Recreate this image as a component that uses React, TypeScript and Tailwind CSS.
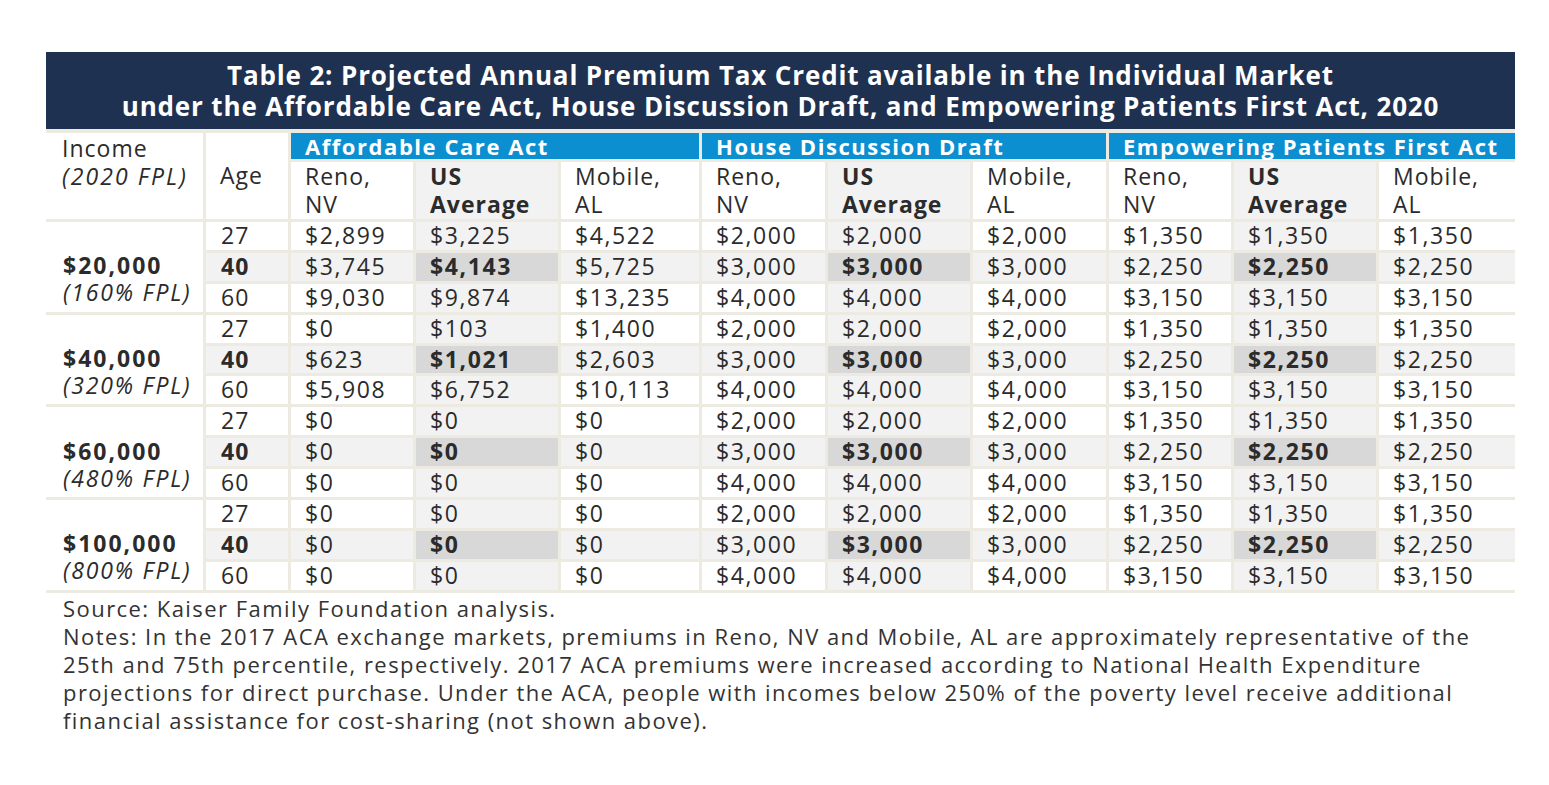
import React from "react";

const FONT = { fontFamily: '"Open Sans", "Noto Sans", sans-serif' };

type Group = {
  income: string;
  fpl: string;
  rows: { age: string; vals: string[] }[];
};

const groups: Group[] = [
  {
    income: "$20,000",
    fpl: "(160% FPL)",
    rows: [
      { age: "27", vals: ["$2,899", "$3,225", "$4,522", "$2,000", "$2,000", "$2,000", "$1,350", "$1,350", "$1,350"] },
      { age: "40", vals: ["$3,745", "$4,143", "$5,725", "$3,000", "$3,000", "$3,000", "$2,250", "$2,250", "$2,250"] },
      { age: "60", vals: ["$9,030", "$9,874", "$13,235", "$4,000", "$4,000", "$4,000", "$3,150", "$3,150", "$3,150"] },
    ],
  },
  {
    income: "$40,000",
    fpl: "(320% FPL)",
    rows: [
      { age: "27", vals: ["$0", "$103", "$1,400", "$2,000", "$2,000", "$2,000", "$1,350", "$1,350", "$1,350"] },
      { age: "40", vals: ["$623", "$1,021", "$2,603", "$3,000", "$3,000", "$3,000", "$2,250", "$2,250", "$2,250"] },
      { age: "60", vals: ["$5,908", "$6,752", "$10,113", "$4,000", "$4,000", "$4,000", "$3,150", "$3,150", "$3,150"] },
    ],
  },
  {
    income: "$60,000",
    fpl: "(480% FPL)",
    rows: [
      { age: "27", vals: ["$0", "$0", "$0", "$2,000", "$2,000", "$2,000", "$1,350", "$1,350", "$1,350"] },
      { age: "40", vals: ["$0", "$0", "$0", "$3,000", "$3,000", "$3,000", "$2,250", "$2,250", "$2,250"] },
      { age: "60", vals: ["$0", "$0", "$0", "$4,000", "$4,000", "$4,000", "$3,150", "$3,150", "$3,150"] },
    ],
  },
  {
    income: "$100,000",
    fpl: "(800% FPL)",
    rows: [
      { age: "27", vals: ["$0", "$0", "$0", "$2,000", "$2,000", "$2,000", "$1,350", "$1,350", "$1,350"] },
      { age: "40", vals: ["$0", "$0", "$0", "$3,000", "$3,000", "$3,000", "$2,250", "$2,250", "$2,250"] },
      { age: "60", vals: ["$0", "$0", "$0", "$4,000", "$4,000", "$4,000", "$3,150", "$3,150", "$3,150"] },
    ],
  },
];

const sections = ["Affordable Care Act", "House Discussion Draft", "Empowering Patients First Act"];

export default function App() {
  return (
    <div className="min-h-screen bg-white pt-[52px] pl-[46px] text-[#2b2b2b]" style={FONT}>
      <div className="w-[1469px]">
        <div className="bg-[#1f3150] pt-[8px] pb-[8px] text-center text-white font-bold text-[26px] leading-[30.5px] tracking-[0.85px]">
          <div className="whitespace-nowrap">Table 2: Projected Annual Premium Tax Credit available in the Individual Market</div>
          <div className="whitespace-nowrap">under the Affordable Care Act, House Discussion Draft, and Empowering Patients First Act, 2020</div>
        </div>
        <div className="grid grid-cols-[157px_82px_122px_142px_138px_123px_142px_133px_122px_142px_136px] grid-rows-[26px_57px_repeat(12,27.9px)] gap-[3px] bg-[#edeae1] pt-[4px] pb-[3px] text-[23px] tracking-[1px]">
          <div className="row-span-2 bg-white pl-[16px] pt-[1px] leading-[28px]">
            <div>Income</div>
            <div className="italic tracking-[2.1px] whitespace-nowrap">(2020 FPL)</div>
          </div>
          <div className="row-span-2 bg-white pl-[14px] flex items-center leading-[28px]">
            <span className="mt-[-2px]">Age</span>
          </div>
          {sections.map((s) => (
            <div
              key={s}
              className="col-span-3 bg-[#0b8fd0] text-white font-bold text-[22px] leading-[26px] pl-[14px] tracking-[1.55px] whitespace-nowrap"
            >
              {s}
            </div>
          ))}
          {sections.map((s) => (
            <React.Fragment key={s + "h"}>
              <div className="bg-white pl-[14px] leading-[28px]">
                Reno,
                <br />
                NV
              </div>
              <div className="bg-[#f2f2f2] pl-[14px] leading-[28px] font-bold">
                US
                <br />
                Average
              </div>
              <div className="bg-white pl-[14px] leading-[28px]">
                Mobile,
                <br />
                AL
              </div>
            </React.Fragment>
          ))}
          {groups.map((g) => (
            <React.Fragment key={g.income}>
              {g.rows.map((r, ri) => {
                const mid = ri === 1;
                return (
                  <React.Fragment key={g.income + r.age}>
                    {ri === 0 && (
                      <div className="row-span-3 bg-white pl-[17px] pt-[25px] flex flex-col justify-center leading-[27px]">
                        <div className="font-bold tracking-[2px] whitespace-nowrap">{g.income}</div>
                        <div className="italic tracking-[1.8px] whitespace-nowrap">{g.fpl}</div>
                      </div>
                    )}
                    <div className={`${mid ? "bg-[#f2f2f2] font-bold" : "bg-white"} pl-[15px] leading-[26px]`}>{r.age}</div>
                    {r.vals.map((v, vi) => {
                      const isUS = vi % 3 === 1;
                      let cls = "bg-white";
                      if (isUS && mid) cls = "bg-[#d8d8d8] font-bold";
                      else if (isUS || mid) cls = "bg-[#f2f2f2]";
                      return (
                        <div key={vi} className={`${cls} pl-[14px] leading-[26px] tracking-[1.6px] whitespace-nowrap`}>
                          {v}
                        </div>
                      );
                    })}
                  </React.Fragment>
                );
              })}
            </React.Fragment>
          ))}
        </div>
        <div className="pl-[17px] pt-[1px] text-[22px] leading-[28px] tracking-[1.45px] text-[#333] whitespace-nowrap">
          <div>Source: Kaiser Family Foundation analysis.</div>
          <div>
            Notes: In the 2017 ACA exchange markets, premiums in Reno, NV and Mobile, AL are approximately representative of the
            <br />
            25th and 75th percentile, respectively. 2017 ACA premiums were increased according to National Health Expenditure
            <br />
            projections for direct purchase. Under the ACA, people with incomes below 250% of the poverty level receive additional
            <br />
            financial assistance for cost-sharing (not shown above).
          </div>
        </div>
      </div>
    </div>
  );
}
